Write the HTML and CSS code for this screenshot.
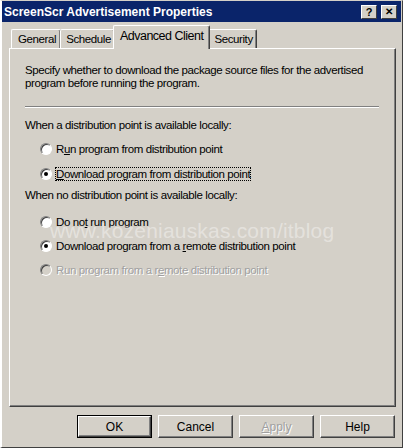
FILE: index.html
```html
<!DOCTYPE html>
<html>
<head>
<title>ScreenScr Advertisement Properties</title>
<link rel="stylesheet" href="styles.css">
</head>
<body>

<div class="window">
	<div class="titlebar">
		<span class="title">ScreenScr Advertisement Properties</span>
		<span class="tbtn">?</span>
		<span class="tbtn x">&#x2715;</span>
	</div><!-- end titlebar -->

	<div class="tabs">
		<span class="tab first">General</span>
		<span class="tab">Schedule</span>
		<span class="tab active">Advanced Client</span>
		<span class="tab">Security</span>
	</div><!-- end tabs -->

	<div class="panel">
		<p class="intro">Specify whether to download the package source files for the advertised program before running the program.</p>
		<hr class="sep" />

		<div class="group">When a distribution point is available locally:</div>
		<div class="opt"><span class="radio"></span><span>R<u>u</u>n program from distribution point</span></div>
		<div class="opt"><span class="radio on"></span><span class="focus"><u>D</u>ownload program from distribution point</span></div>

		<div class="group second">When no distribution point is available locally:</div>
		<div class="opt"><span class="radio"></span><span>Do no<u>t</u> run program</span></div>
		<div class="opt short"><span class="radio on"></span><span>Download program from a <u>r</u>emote distribution point</span></div>
		<div class="opt off"><span class="radio"></span><span>Run program from a r<u>e</u>mote distribution point</span></div>

		<div class="mark">www.kozeniauskas.com/itblog</div>
	</div><!-- end panel -->

	<div class="buttons">
		<button class="default">OK</button>
		<button>Cancel</button>
		<button class="off"><u>A</u>pply</button>
		<button>Help</button>
	</div><!-- end buttons -->
</div><!-- end window -->

</body>
</html>
```

FILE: styles.css
```css
body {
margin: 0;
background: #d4d0c8;
font-family: "Liberation Sans", Arial, sans-serif;
font-size: 11px;
color: #000;
}

.window {
width: 403px;
height: 448px;
box-sizing: border-box;
background: #d4d0c8;
border-left: solid #fff 2px;
border-top: solid #d4d0c8 1px;
border-right: solid #404040 1px;
border-bottom: solid #404040 1px;
display: flex;
flex-direction: column;
position: relative;
overflow: hidden;
}

.titlebar {
height: 21px;
margin: 0 1px 0 0;
background: #0a246a;
display: flex;
align-items: center;
padding: 0 4px 0 2px;
gap: 2px;
}
.title {
flex: 1;
color: #fff;
font-weight: bold;
font-size: 12px;
letter-spacing: 0;
}
.tbtn {
width: 14px;
height: 12px;
background: #d4d0c8;
border: solid 1px;
border-color: #fff #404040 #404040 #fff;
font-weight: bold;
font-size: 11px;
line-height: 12px;
text-align: center;
}
.tbtn.x {
margin-left: 2px;
font-size: 10px;
}

.tabs {
display: flex;
align-items: flex-end;
height: 27px;
padding-left: 9px;
}
.tab {
height: 19px;
line-height: 19px;
padding: 0 3px 0 5px;
font-size: 11.5px;
letter-spacing: -0.4px;
border: solid #fff 1px;
border-bottom: none;
border-right: solid #404040 1px;
box-shadow: inset -1px 0 0 #808080;
border-radius: 2px 2px 0 0;
margin-left: -1px;
}
.tab.first {
margin-left: 0;
padding: 0 4px 0 6px;
}
.tab.active {
height: 23px;
line-height: 21px;
padding: 0 6px;
font-size: 12.5px;
letter-spacing: -0.5px;
background: #d4d0c8;
position: relative;
z-index: 1;
margin: 0 -1px 0 -2px;
}

.panel {
margin: -1px 6px 0 7px;
height: 359px;
box-sizing: border-box;
border: solid 1px;
border-color: #fff #404040 #404040 #fff;
box-shadow: inset -1px -1px 0 #808080;
padding: 15px 15px 0 15px;
position: relative;
}
.intro {
margin: 0;
font-size: 11.5px;
line-height: 13px;
letter-spacing: -0.4px;
}
.sep {
margin: 16px 0 9px;
border: none;
border-top: solid #808080 1px;
border-bottom: solid #fff 1px;
width: 354px;
}
.group {
font-size: 11.5px;
letter-spacing: -0.4px;
height: 19px;
line-height: 16px;
}
.group.second {
height: 22px;
margin-top: 1px;
}
.opt {
display: flex;
align-items: center;
gap: 4px;
height: 25px;
padding-left: 15px;
font-size: 11.5px;
letter-spacing: -0.4px;
}
.opt.short {
height: 23px;
}
.opt.off {
color: #a0a0a0;
text-shadow: 1px 1px 0 #fff;
}
.radio {
width: 12px;
height: 12px;
box-sizing: border-box;
border-radius: 50%;
background: #fff;
border: solid 1px;
border-color: #808080 #fff #fff #808080;
box-shadow: inset 1px 1px 0 #404040;
position: relative;
}
.opt.off .radio {
background: #d4d0c8;
}
.radio.on::after {
content: "";
position: absolute;
left: 3px;
top: 3px;
width: 4px;
height: 4px;
border-radius: 50%;
background: #000;
}
.focus {
outline: dotted #000 1px;
outline-offset: 0;
}
.mark {
position: absolute;
left: 40px;
top: 170px;
font-size: 21px;
color: rgba(255,255,255,0.4);
letter-spacing: 0.2px;
pointer-events: none;
}

.buttons {
display: flex;
justify-content: flex-end;
gap: 6px;
padding: 8px 7px 0 0;
}
button {
width: 75px;
height: 23px;
font-family: "Liberation Sans", Arial, sans-serif;
font-size: 12px;
background: #d4d0c8;
color: #000;
border: solid 1px;
border-color: #fff #404040 #404040 #fff;
box-shadow: inset -1px -1px 0 #808080;
padding: 0;
}
button.default {
outline: solid #000 1px;
outline-offset: -1px;
border-width: 2px;
box-shadow: inset -1px -1px 0 #808080;
}
button.off {
color: #a0a0a0;
text-shadow: 1px 1px 0 #fff;
}
```
